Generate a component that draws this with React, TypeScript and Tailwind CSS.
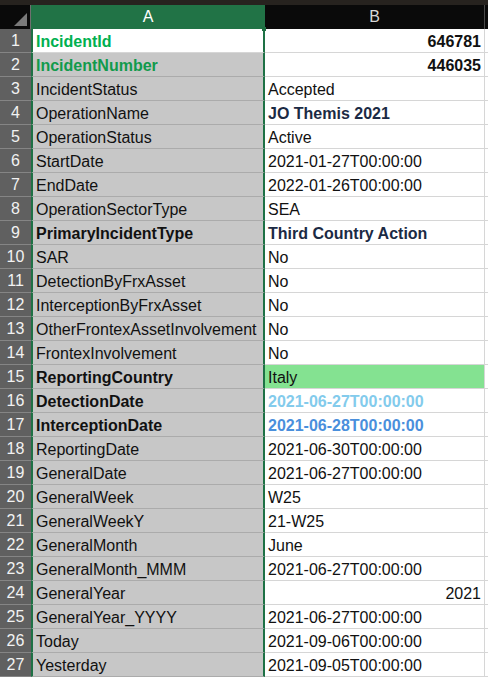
import React from "react";

type Row = {
  label: string;
  value: string;
  labelClass?: string;
  valueClass?: string;
  right?: boolean;
  fill?: string;
};

const rows: Row[] = [
  { label: "IncidentId", value: "646781", labelClass: "font-bold text-[#00b050]", valueClass: "font-bold", right: true },
  { label: "IncidentNumber", value: "446035", labelClass: "font-bold text-[#119a4c]", valueClass: "font-bold", right: true },
  { label: "IncidentStatus", value: "Accepted" },
  { label: "OperationName", value: "JO Themis 2021", valueClass: "font-bold text-[#1b2a44]" },
  { label: "OperationStatus", value: "Active" },
  { label: "StartDate", value: "2021-01-27T00:00:00" },
  { label: "EndDate", value: "2022-01-26T00:00:00" },
  { label: "OperationSectorType", value: "SEA" },
  { label: "PrimaryIncidentType", value: "Third Country Action", labelClass: "font-bold", valueClass: "font-bold text-[#1b2a44]" },
  { label: "SAR", value: "No" },
  { label: "DetectionByFrxAsset", value: "No" },
  { label: "InterceptionByFrxAsset", value: "No" },
  { label: "OtherFrontexAssetInvolvement", value: "No" },
  { label: "FrontexInvolvement", value: "No" },
  { label: "ReportingCountry", value: "Italy", labelClass: "font-bold", fill: "bg-[#84e291]" },
  { label: "DetectionDate", value: "2021-06-27T00:00:00", labelClass: "font-bold", valueClass: "font-bold text-[#83cbec]" },
  { label: "InterceptionDate", value: "2021-06-28T00:00:00", labelClass: "font-bold", valueClass: "font-bold text-[#4a8fdc]" },
  { label: "ReportingDate", value: "2021-06-30T00:00:00" },
  { label: "GeneralDate", value: "2021-06-27T00:00:00" },
  { label: "GeneralWeek", value: "W25" },
  { label: "GeneralWeekY", value: "21-W25" },
  { label: "GeneralMonth", value: "June" },
  { label: "GeneralMonth_MMM", value: "2021-06-27T00:00:00" },
  { label: "GeneralYear", value: "2021", right: true },
  { label: "GeneralYear_YYYY", value: "2021-06-27T00:00:00" },
  { label: "Today", value: "2021-09-06T00:00:00" },
  { label: "Yesterday", value: "2021-09-05T00:00:00" },
];

export default function App() {
  return (
    <div
      className="relative w-[488px] h-[677px] overflow-hidden bg-white text-[16px] leading-[18px] text-[#111]"
      style={{ fontFamily: '"Liberation Sans", Arial, sans-serif' }}
    >
      <div className="h-[5px] bg-[#27231f]" />
      {/* column headers */}
      <div className="flex h-[24px] bg-[#0a0a0a]">
        <div className="relative w-[31px] border-r border-[#6f6f6f]">
          <div className="absolute bottom-[3px] right-[3px] h-0 w-0 border-l-[13px] border-t-[13px] border-l-transparent border-t-transparent border-b-[0px] border-r-[13px] border-r-[#7a7a7a] rotate-0" style={{ borderBottom: "13px solid #7a7a7a", borderRight: "0", borderTop: "0" }} />
        </div>
        <div className="flex w-[234px] items-center justify-center bg-[#217346] text-white">A</div>
        <div className="flex w-[220px] items-center justify-center border-r border-[#4a4a4a] text-[#d8d8d8]">B</div>
        <div className="flex-1" />
      </div>
      <div className="absolute left-[262px] top-[27px] h-[4px] w-[4px] bg-[#1e6f42]" />

      {rows.map((r, i) => (
        <div key={r.label} className="flex h-[24px]">
          <div className="flex w-[31px] items-end justify-center border-b border-[#858585] bg-[#606060] pb-[2px] text-[#f2f2f2]">
            {i + 1}
          </div>
          <div
            className={`flex w-[234px] items-end border-x-2 border-x-[#1e7145] border-b pb-[1px] pl-[3px] ${
              i === 0 ? "bg-white border-b-[#d6d6d6]" : "bg-[#c7c7c7] border-b-[#ababab]"
            } ${r.labelClass ?? ""}`}
          >
            {r.label}
          </div>
          <div
            className={`flex w-[220px] items-end border-b border-r border-[#d6d6d6] pb-[1px] px-[3px] ${
              r.right ? "justify-end" : ""
            } ${r.fill ?? ""} ${r.valueClass ?? ""}`}
          >
            {r.value}
          </div>
          <div className="flex-1 border-b border-[#d6d6d6]" />
        </div>
      ))}
    </div>
  );
}
